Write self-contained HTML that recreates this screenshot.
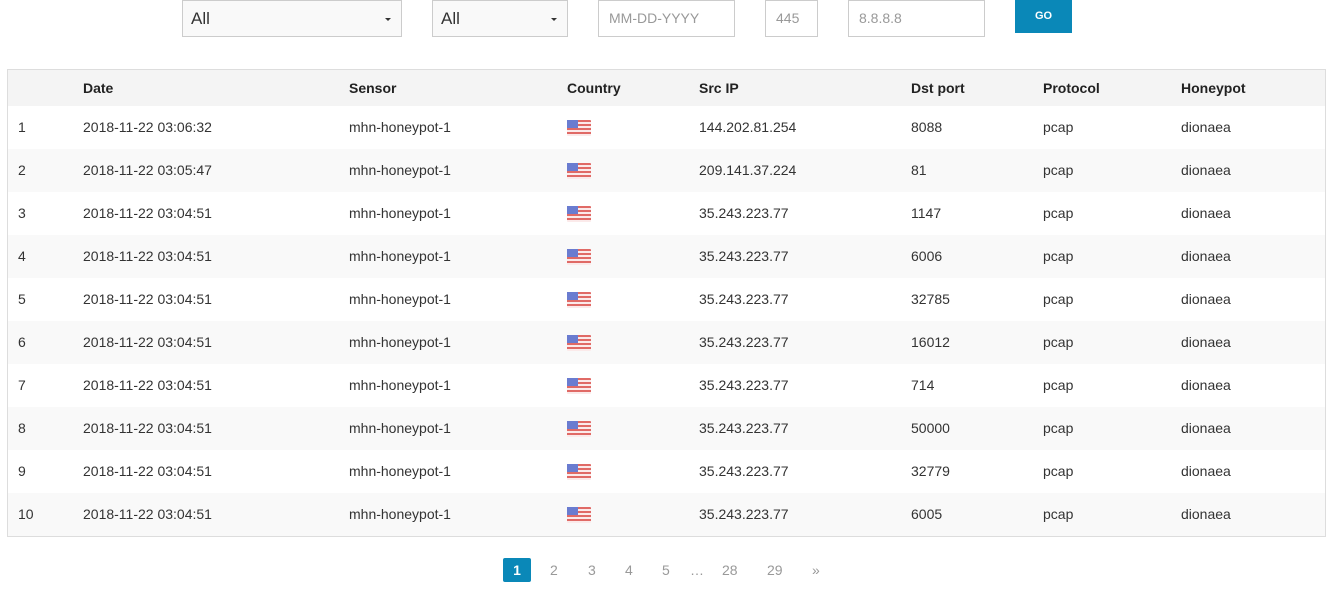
<!DOCTYPE html>
<html><head><meta charset="utf-8">
<style>
*{margin:0;padding:0;box-sizing:border-box}
body{width:1339px;height:599px;background:#fff;font-family:"Liberation Sans",Arial,sans-serif;font-size:14px;color:#333;position:relative;overflow:hidden}
.ctl{position:absolute;top:0;height:37px;border:1px solid #ccc;background:#fff;font-size:14px;color:#999;padding:0 10px;line-height:35px}
.sel{background:#f9f9f9;color:#333;font-size:17px;padding-left:8px}
.sel:after{content:"";position:absolute;right:10px;top:17px;border-left:3px solid transparent;border-right:3px solid transparent;border-top:3px solid #333}
.go{position:absolute;left:1015px;top:0;width:57px;height:33px;background:#0a88b8;color:#fff;font-size:11px;font-weight:bold;text-align:center;line-height:33px}
.tbl{position:absolute;left:7px;top:69px;width:1319px;height:468px;border:1px solid #ddd;background:#fff}
.row{position:absolute;left:0;width:1317px;height:43px}
.row span{position:absolute;top:0;line-height:43px;white-space:nowrap}
.hd{top:0;height:36px;background:#f4f4f4}
.hd span{line-height:36px;font-weight:bold;color:#222}
.alt{background:#f9f9f9}
.flag{position:absolute;top:14px;width:24px;height:16px;background:repeating-linear-gradient(#e06a66 0 2px,#fbeaea 2px 4px);border-radius:1px}
.flag:before{content:"";position:absolute;left:0;top:0;width:11px;height:8px;background:#6a7cd0}
.pg{position:absolute;top:558px;height:24px;line-height:24px;font-size:14px;color:#999;text-align:center}
.pg.act{background:#0a88b8;color:#fff;font-weight:bold;border-radius:2px;width:28px}
</style></head><body>
<div class="ctl sel" style="left:182px;width:220px">All</div>
<div class="ctl sel" style="left:432px;width:136px">All</div>
<div class="ctl" style="left:598px;width:137px">MM-DD-YYYY</div>
<div class="ctl" style="left:765px;width:53px">445</div>
<div class="ctl" style="left:848px;width:137px">8.8.8.8</div>
<div class="go">GO</div>
<div class="tbl">
<div class="row hd"><span style="left:75px">Date</span><span style="left:341px">Sensor</span><span style="left:559px">Country</span><span style="left:691px">Src IP</span><span style="left:903px">Dst port</span><span style="left:1035px">Protocol</span><span style="left:1173px">Honeypot</span></div>
<div id="rows"></div>
</div>
<div class="pg act" style="left:503px">1</div>
<div class="pg" style="left:550px">2</div>
<div class="pg" style="left:588px">3</div>
<div class="pg" style="left:625px">4</div>
<div class="pg" style="left:662px">5</div>
<div class="pg" style="left:690px">…</div>
<div class="pg" style="left:722px">28</div>
<div class="pg" style="left:767px">29</div>
<div class="pg" style="left:812px">»</div>
<script>
var d=[["2018-11-22 03:06:32","144.202.81.254","8088"],["2018-11-22 03:05:47","209.141.37.224","81"],["2018-11-22 03:04:51","35.243.223.77","1147"],["2018-11-22 03:04:51","35.243.223.77","6006"],["2018-11-22 03:04:51","35.243.223.77","32785"],["2018-11-22 03:04:51","35.243.223.77","16012"],["2018-11-22 03:04:51","35.243.223.77","714"],["2018-11-22 03:04:51","35.243.223.77","50000"],["2018-11-22 03:04:51","35.243.223.77","32779"],["2018-11-22 03:04:51","35.243.223.77","6005"]];
var h="";d.forEach(function(r,i){h+='<div class="row'+(i%2?' alt':'')+'" style="top:'+(36+i*43)+'px"><span style="left:10px">'+(i+1)+'</span><span style="left:75px">'+r[0]+'</span><span style="left:341px">mhn-honeypot-1</span><i class="flag" style="left:559px"></i><span style="left:691px">'+r[1]+'</span><span style="left:903px">'+r[2]+'</span><span style="left:1035px">pcap</span><span style="left:1173px">dionaea</span></div>';});
document.getElementById("rows").innerHTML=h;
</script>
</body></html>
